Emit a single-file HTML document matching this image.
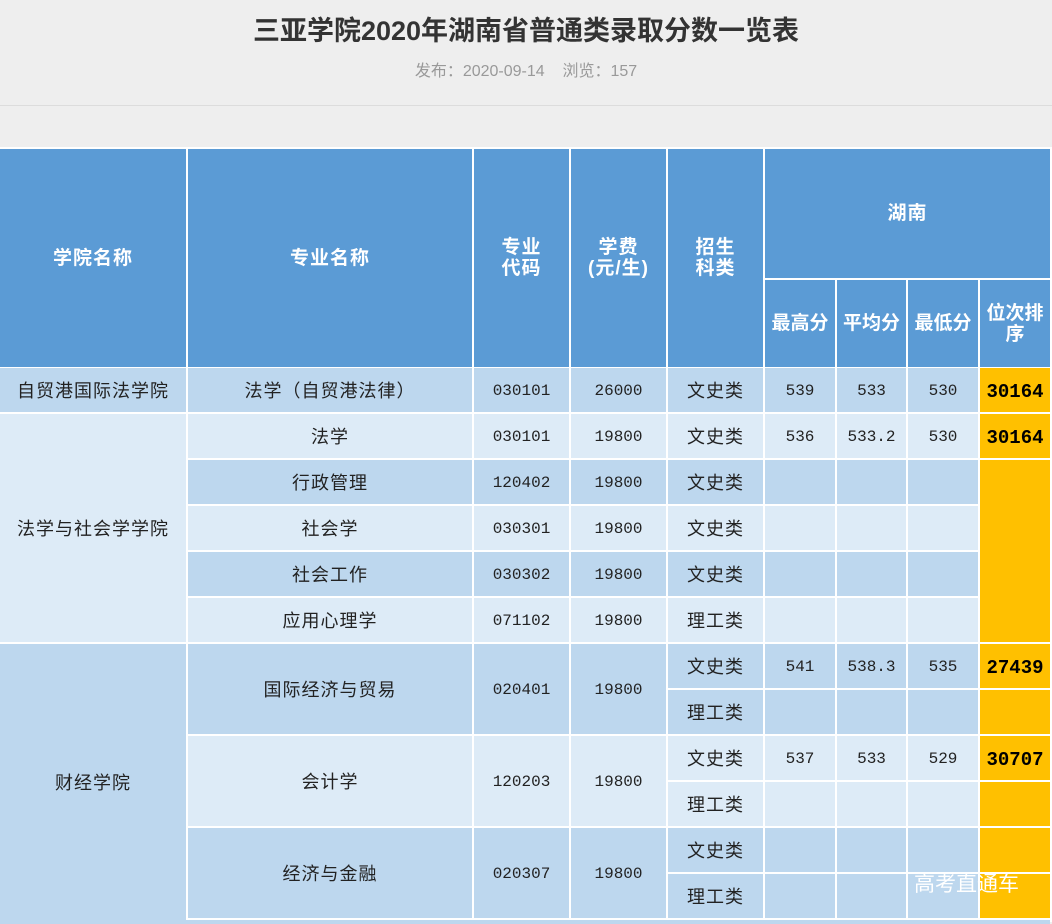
<!DOCTYPE html>
<html><head><meta charset="utf-8"><style>
body{margin:0;width:1052px;height:922px;background:#eeeeee;overflow:hidden;position:relative;font-family:"Liberation Sans","Noto Sans CJK SC",sans-serif;}
.t{position:absolute;left:0;width:1052px;top:9px;text-align:center;font-size:27px;font-weight:bold;color:#333;}
.s{position:absolute;left:0;width:1052px;top:57px;text-align:center;font-size:16px;color:#999;}
.hr{position:absolute;left:0;top:105px;width:1052px;height:1px;background:#dcdcdc;}
.tb{position:absolute;left:0;top:147px;width:1052px;height:775px;background:#fff;}
.c{position:absolute;display:flex;align-items:center;justify-content:center;text-align:center;font-size:18px;letter-spacing:1px;color:#222;box-sizing:border-box;line-height:1.1;padding-top:4px;}
.h{background:#5b9bd5;color:#fff;font-weight:bold;font-size:19px;padding-top:2px;}
.d{background:#bdd7ee;}
.l{background:#ddebf7;}
.o{background:#ffc000;font-weight:bold;font-family:"Liberation Mono","Noto Sans CJK SC",monospace;font-size:19px;letter-spacing:0;color:#000;}
.n{font-family:"Liberation Mono","Noto Sans CJK SC",monospace;font-size:16px;letter-spacing:0;}
.w{position:absolute;left:914px;top:868px;font-size:21px;color:#fff;letter-spacing:0;}
</style></head><body>
<div class="t">三亚学院2020年湖南省普通类录取分数一览表</div>
<div class="s">发布：2020-09-14&nbsp;&nbsp;&nbsp;&nbsp;浏览：157</div>
<div class="hr"></div>
<div class="tb"></div>

<div class="c h" style="left:0;top:149px;width:186px;height:218px">学院名称</div>
<div class="c h" style="left:188px;top:149px;width:284px;height:218px">专业名称</div>
<div class="c h" style="left:474px;top:149px;width:95px;height:218px">专业<br>代码</div>
<div class="c h" style="left:571px;top:149px;width:95px;height:218px">学费<br>(元/生)</div>
<div class="c h" style="left:668px;top:149px;width:95px;height:218px">招生<br>科类</div>
<div class="c h" style="left:765px;top:149px;width:285px;height:129px">湖南</div>
<div class="c h" style="left:765px;top:280px;width:70px;height:87px;letter-spacing:0">最高分</div>
<div class="c h" style="left:837px;top:280px;width:69px;height:87px;letter-spacing:0">平均分</div>
<div class="c h" style="left:908px;top:280px;width:70px;height:87px;letter-spacing:0">最低分</div>
<div class="c h" style="left:980px;top:280px;width:70px;height:87px;letter-spacing:0">位次排<br>序</div>

<div class="c d" style="left:0;top:368px;width:186px;height:44px">自贸港国际法学院</div>
<div class="c d" style="left:188px;top:368px;width:284px;height:44px">法学（自贸港法律）</div>
<div class="c d n" style="left:474px;top:368px;width:95px;height:44px">030101</div>
<div class="c d n" style="left:571px;top:368px;width:95px;height:44px">26000</div>
<div class="c d" style="left:668px;top:368px;width:95px;height:44px">文史类</div>
<div class="c d n" style="left:765px;top:368px;width:70px;height:44px">539</div>
<div class="c d n" style="left:837px;top:368px;width:69px;height:44px">533</div>
<div class="c d n" style="left:908px;top:368px;width:70px;height:44px">530</div>
<div class="c o" style="left:980px;top:368px;width:70px;height:44px">30164</div>

<div class="c l" style="left:0;top:414px;width:186px;height:228px">法学与社会学学院</div>
<div class="c l" style="left:188px;top:414px;width:284px;height:44px">法学</div>
<div class="c l n" style="left:474px;top:414px;width:95px;height:44px">030101</div>
<div class="c l n" style="left:571px;top:414px;width:95px;height:44px">19800</div>
<div class="c l" style="left:668px;top:414px;width:95px;height:44px">文史类</div>
<div class="c l n" style="left:765px;top:414px;width:70px;height:44px">536</div>
<div class="c l n" style="left:837px;top:414px;width:69px;height:44px">533.2</div>
<div class="c l n" style="left:908px;top:414px;width:70px;height:44px">530</div>
<div class="c o" style="left:980px;top:414px;width:70px;height:44px">30164</div>
<div class="c d" style="left:188px;top:460px;width:284px;height:44px">行政管理</div>
<div class="c d n" style="left:474px;top:460px;width:95px;height:44px">120402</div>
<div class="c d n" style="left:571px;top:460px;width:95px;height:44px">19800</div>
<div class="c d" style="left:668px;top:460px;width:95px;height:44px">文史类</div>
<div class="c d" style="left:765px;top:460px;width:70px;height:44px"></div>
<div class="c d" style="left:837px;top:460px;width:69px;height:44px"></div>
<div class="c d" style="left:908px;top:460px;width:70px;height:44px"></div>
<div class="c l" style="left:188px;top:506px;width:284px;height:44px">社会学</div>
<div class="c l n" style="left:474px;top:506px;width:95px;height:44px">030301</div>
<div class="c l n" style="left:571px;top:506px;width:95px;height:44px">19800</div>
<div class="c l" style="left:668px;top:506px;width:95px;height:44px">文史类</div>
<div class="c l" style="left:765px;top:506px;width:70px;height:44px"></div>
<div class="c l" style="left:837px;top:506px;width:69px;height:44px"></div>
<div class="c l" style="left:908px;top:506px;width:70px;height:44px"></div>
<div class="c d" style="left:188px;top:552px;width:284px;height:44px">社会工作</div>
<div class="c d n" style="left:474px;top:552px;width:95px;height:44px">030302</div>
<div class="c d n" style="left:571px;top:552px;width:95px;height:44px">19800</div>
<div class="c d" style="left:668px;top:552px;width:95px;height:44px">文史类</div>
<div class="c d" style="left:765px;top:552px;width:70px;height:44px"></div>
<div class="c d" style="left:837px;top:552px;width:69px;height:44px"></div>
<div class="c d" style="left:908px;top:552px;width:70px;height:44px"></div>
<div class="c l" style="left:188px;top:598px;width:284px;height:44px">应用心理学</div>
<div class="c l n" style="left:474px;top:598px;width:95px;height:44px">071102</div>
<div class="c l n" style="left:571px;top:598px;width:95px;height:44px">19800</div>
<div class="c l" style="left:668px;top:598px;width:95px;height:44px">理工类</div>
<div class="c l" style="left:765px;top:598px;width:70px;height:44px"></div>
<div class="c l" style="left:837px;top:598px;width:69px;height:44px"></div>
<div class="c l" style="left:908px;top:598px;width:70px;height:44px"></div>
<div class="c o" style="left:980px;top:460px;width:70px;height:182px"></div>

<div class="c d" style="left:0;top:644px;width:186px;height:276px">财经学院</div>
<div class="c d" style="left:188px;top:644px;width:284px;height:90px">国际经济与贸易</div>
<div class="c d n" style="left:474px;top:644px;width:95px;height:90px">020401</div>
<div class="c d n" style="left:571px;top:644px;width:95px;height:90px">19800</div>
<div class="c d" style="left:668px;top:644px;width:95px;height:44px">文史类</div>
<div class="c d n" style="left:765px;top:644px;width:70px;height:44px">541</div>
<div class="c d n" style="left:837px;top:644px;width:69px;height:44px">538.3</div>
<div class="c d n" style="left:908px;top:644px;width:70px;height:44px">535</div>
<div class="c o" style="left:980px;top:644px;width:70px;height:44px">27439</div>
<div class="c d" style="left:668px;top:690px;width:95px;height:44px">理工类</div>
<div class="c d" style="left:765px;top:690px;width:70px;height:44px"></div>
<div class="c d" style="left:837px;top:690px;width:69px;height:44px"></div>
<div class="c d" style="left:908px;top:690px;width:70px;height:44px"></div>
<div class="c o" style="left:980px;top:690px;width:70px;height:44px"></div>

<div class="c l" style="left:188px;top:736px;width:284px;height:90px">会计学</div>
<div class="c l n" style="left:474px;top:736px;width:95px;height:90px">120203</div>
<div class="c l n" style="left:571px;top:736px;width:95px;height:90px">19800</div>
<div class="c l" style="left:668px;top:736px;width:95px;height:44px">文史类</div>
<div class="c l n" style="left:765px;top:736px;width:70px;height:44px">537</div>
<div class="c l n" style="left:837px;top:736px;width:69px;height:44px">533</div>
<div class="c l n" style="left:908px;top:736px;width:70px;height:44px">529</div>
<div class="c o" style="left:980px;top:736px;width:70px;height:44px">30707</div>
<div class="c l" style="left:668px;top:782px;width:95px;height:44px">理工类</div>
<div class="c l" style="left:765px;top:782px;width:70px;height:44px"></div>
<div class="c l" style="left:837px;top:782px;width:69px;height:44px"></div>
<div class="c l" style="left:908px;top:782px;width:70px;height:44px"></div>
<div class="c o" style="left:980px;top:782px;width:70px;height:44px"></div>

<div class="c d" style="left:188px;top:828px;width:284px;height:90px">经济与金融</div>
<div class="c d n" style="left:474px;top:828px;width:95px;height:90px">020307</div>
<div class="c d n" style="left:571px;top:828px;width:95px;height:90px">19800</div>
<div class="c d" style="left:668px;top:828px;width:95px;height:44px">文史类</div>
<div class="c d" style="left:765px;top:828px;width:70px;height:44px"></div>
<div class="c d" style="left:837px;top:828px;width:69px;height:44px"></div>
<div class="c d" style="left:908px;top:828px;width:70px;height:44px"></div>
<div class="c o" style="left:980px;top:828px;width:70px;height:44px"></div>
<div class="c d" style="left:668px;top:874px;width:95px;height:44px">理工类</div>
<div class="c d" style="left:765px;top:874px;width:70px;height:44px"></div>
<div class="c d" style="left:837px;top:874px;width:69px;height:44px"></div>
<div class="c d" style="left:908px;top:874px;width:70px;height:44px"></div>
<div class="c o" style="left:980px;top:874px;width:70px;height:44px"></div>
<div class="c d" style="left:0;top:920px;width:1050px;height:4px;padding:0"></div>
<div class="w">高考直通车</div>
</body></html>
